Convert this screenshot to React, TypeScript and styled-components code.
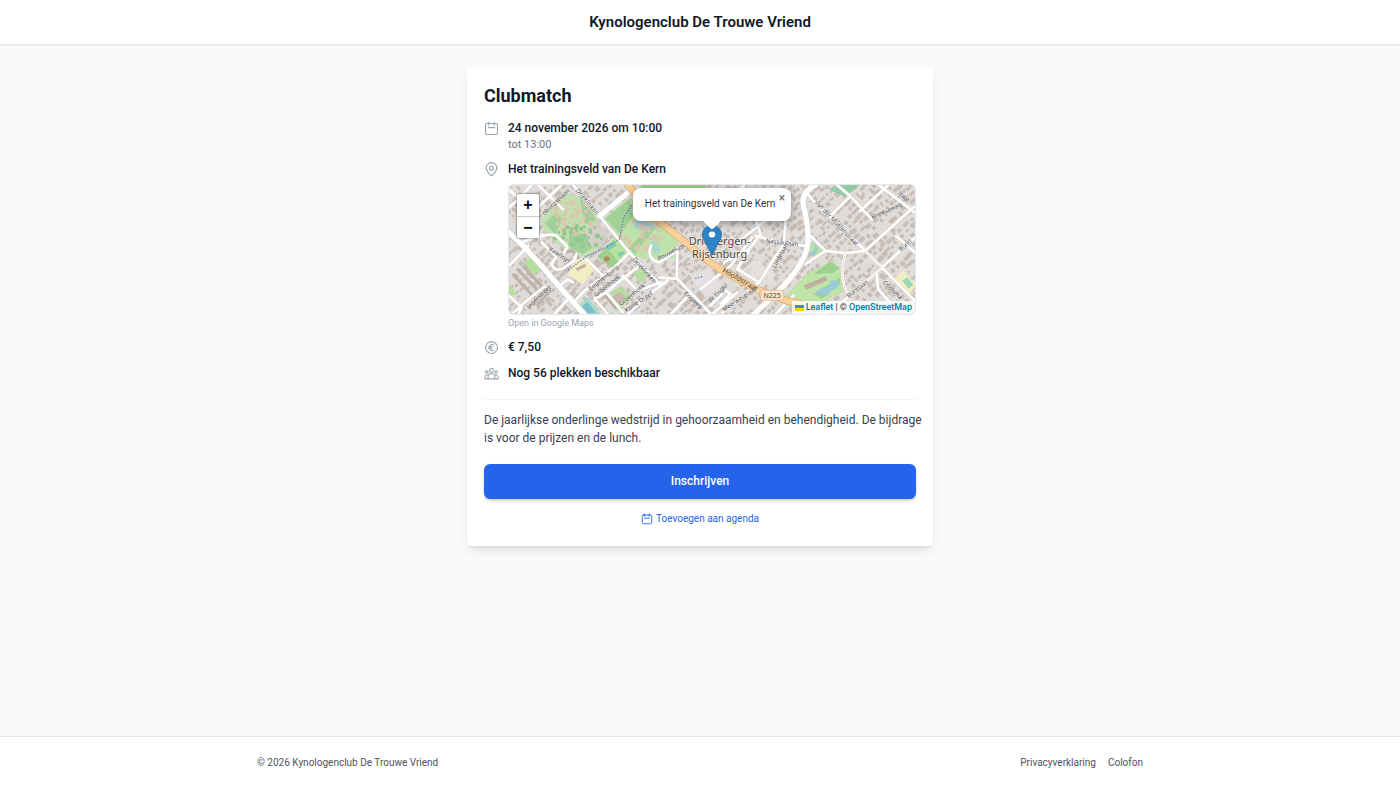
import React from "react";
import styled, { createGlobalStyle } from "styled-components";

const GlobalStyle = createGlobalStyle`
  *, *::before, *::after { box-sizing: border-box; }
  body {
    margin: 0;
    background: #f9fafb;
    color: #111827;
    font-family: Roboto, "Liberation Sans", sans-serif;
    font-size: 12px;
    line-height: 17px;
  }
  h1, h2, p { margin: 0; }
  a { text-decoration: none; }
`;

const Page = styled.div`
  display: flex;
  flex-direction: column;
  min-height: 100vh;
`;

const Header = styled.header`
  background: #ffffff;
  padding: 11px 16px;
  text-align: center;
  box-shadow: 0 1px 2px rgba(0, 0, 0, 0.12);
`;

const ClubName = styled.p`
  font-size: 15px;
  line-height: 22px;
  font-weight: 600;
`;

const Main = styled.main`
  flex: 1;
  padding: 24px 12px;
`;

const Card = styled.article`
  max-width: 466px;
  margin: 0 auto;
  padding: 17px 17px 20px;
  background: #ffffff;
  border-radius: 6px;
  box-shadow: 0 7px 11px -2px rgba(0, 0, 0, 0.1), 0 3px 4px -3px rgba(0, 0, 0, 0.1);
`;

const Title = styled.h1`
  font-size: 18px;
  line-height: 22px;
  font-weight: 700;
`;

const Details = styled.div`
  display: flex;
  flex-direction: column;
  gap: 9px;
  margin-top: 13px;
`;

const DetailRow = styled.div`
  display: flex;
  gap: 9px;
`;

const DetailIcon = styled.svg`
  flex: none;
  width: 15px;
  height: 15px;
  margin-top: 1px;
  fill: none;
  stroke: #9ca3af;
  stroke-width: 1.8;
  stroke-linecap: round;
  stroke-linejoin: round;
`;

const DetailBody = styled.div`
  flex: 1;
  min-width: 0;
`;

const DetailTitle = styled.p`
  font-weight: 500;
`;

const DetailNote = styled.p`
  font-size: 11px;
  line-height: 15px;
  color: #6b7280;
`;

const MapFrame = styled.div`
  position: relative;
  height: 131px;
  margin-top: 6px;
  overflow: hidden;
  border: 1px solid #e5e7eb;
  border-radius: 6px;
  background: #dfdcda;
`;

const MapDrawing = styled.svg`
  display: block;
  width: 100%;
  height: 100%;
`;

const ZoomControl = styled.div`
  position: absolute;
  top: 8px;
  left: 7px;
  display: flex;
  flex-direction: column;
  border: 1px solid rgba(0, 0, 0, 0.25);
  border-radius: 3px;
  box-shadow: 0 0 2px rgba(0, 0, 0, 0.25);
  overflow: hidden;
`;

const ZoomButton = styled.button`
  width: 22px;
  height: 22px;
  padding: 0;
  border: 0;
  background: #ffffff;
  color: #000000;
  font: bold 16px/22px "Liberation Sans", sans-serif;
  & + & { border-top: 1px solid #cccccc; }
`;

const Popup = styled.div`
  position: absolute;
  top: 3px;
  left: 50%;
  width: 158px;
  height: 33px;
  padding-right: 4px;
  transform: translateX(-50%);
  border-radius: 8px;
  background: #ffffff;
  color: #333333;
  font-size: 10px;
  line-height: 32px;
  text-align: center;
  box-shadow: 0 2px 9px rgba(0, 0, 0, 0.4);
`;

const PopupTip = styled.svg`
  position: absolute;
  top: 32px;
  left: 50%;
  width: 20px;
  height: 9px;
  margin-left: -10px;
`;

const PopupClose = styled.button`
  position: absolute;
  top: 3px;
  right: 2px;
  width: 14px;
  height: 14px;
  padding: 0;
  border: 0;
  background: none;
  color: #666666;
  font: 12px/14px Roboto, sans-serif;
`;

const Marker = styled.svg`
  position: absolute;
  top: 40px;
  left: 50%;
  width: 20px;
  height: 31px;
  margin-left: -10px;
`;

const Attribution = styled.div`
  position: absolute;
  right: 0;
  bottom: 0;
  display: flex;
  align-items: center;
  gap: 2px;
  padding: 0 3px;
  background: rgba(255, 255, 255, 0.8);
  color: #333333;
  font-size: 9px;
  line-height: 13px;
  font-weight: 500;
  a { color: #0078a8; }
`;

const MapsLink = styled.a`
  display: block;
  margin-top: 2px;
  font-size: 9px;
  line-height: 13px;
  color: #9ca3af;
`;

const DescriptionBlock = styled.section`
  margin-top: 17px;
  padding-top: 11px;
  border-top: 1px solid #f3f4f6;
`;

const Description = styled.p`
  margin-right: -12px;
  line-height: 18px;
  color: #374151;
`;

const SignUpButton = styled.button`
  display: block;
  width: 100%;
  height: 35px;
  margin-top: 17px;
  border: 0;
  border-radius: 6px;
  background: #2563eb;
  color: #ffffff;
  font: 500 12px/17px Roboto, sans-serif;
  box-shadow: 0 3px 4px -1px rgba(0, 0, 0, 0.12), 0 1px 3px rgba(0, 0, 0, 0.12);
`;

const AgendaLink = styled.a`
  display: flex;
  justify-content: center;
  align-items: center;
  gap: 3px;
  margin-top: 12px;
  font-size: 10px;
  line-height: 15px;
  color: #2563eb;
  svg {
    width: 12px;
    height: 12px;
    margin-top: 0;
    stroke: currentColor;
  }
`;

const Footer = styled.footer`
  background: #ffffff;
  border-top: 1px solid #e5e7eb;
  padding: 18px 12px 17px;
  font-size: 10px;
  line-height: 15px;
  color: #4b5563;
`;

const FooterInner = styled.div`
  display: flex;
  justify-content: space-between;
  max-width: 886px;
  margin: 0 auto;
`;

const FooterNav = styled.nav`
  display: flex;
  gap: 12px;
  a { color: inherit; }
`;

const CalendarGlyph = () => (
  <DetailIcon viewBox="0 0 24 24" aria-hidden="true">
    <rect x="2.5" y="4" width="19" height="17.5" rx="2.5" />
    <path d="M7.500 2v4.500M16.500 2v4.500M7 10.500h10" />
  </DetailIcon>
);

const PinGlyph = () => (
  <DetailIcon viewBox="0 0 24 24" aria-hidden="true">
    <path d="M12 22c-4-3.500-8.500-7.500-8.500-12.500a8.500 8.500 0 0 1 17 0c0 5-4.500 9-8.500 12.500z" />
    <circle cx="12" cy="10" r="3.200" />
  </DetailIcon>
);

const EuroGlyph = () => (
  <DetailIcon viewBox="0 0 24 24" aria-hidden="true">
    <circle cx="12" cy="12" r="9.5" />
    <path d="M15.5 7.8c-3.3-2.4-6.5.1-6.5 4.2s3.200 6.600 6.500 4.200M7.200 10.800h6M7.200 13.200h6" />
  </DetailIcon>
);

const PeopleGlyph = () => (
  <DetailIcon viewBox="0 0 24 24" aria-hidden="true">
    <circle cx="12" cy="7" r="3" />
    <circle cx="4.500" cy="9.500" r="2" />
    <circle cx="19.500" cy="9.500" r="2" />
    <path d="M6.500 20.500v-3a5.500 5.500 0 0 1 11 0v3zM6.500 20.500H1.500v-2.500a3.500 3.500 0 0 1 5-3.200M17.500 20.500h5v-2.500a3.500 3.500 0 0 0-5-3.200" />
  </DetailIcon>
);

/* Repeatable pseudo-random numbers, so houses and trees stay in place between renders. */
const sequence = (seed: number) => () => {
  seed = (seed * 16807) % 2147483647;
  return seed / 2147483647;
};

const housePath = (() => {
  const next = sequence(41);
  let d = "";
  for (let row = -58; row < 62; row++) {
    for (let col = -60; col < 62; col++) {
      const along = col * 17 + next() * 8;
      const across = row * 19 + next() * 8;
      const w = 7 + next() * 11;
      const h = 6 + next() * 9;
      const keep = next() < 0.78;
      const x = 624 + along * 0.72 + across * 0.69;
      const y = 200 + along * -0.69 + across * 0.72;
      if (!keep || x < -10 || x > 1250 || y < -10 || y > 410) continue;
      d += `M${x.toFixed(1)} ${y.toFixed(1)}l${(w * 0.72).toFixed(1)} ${(-w * 0.69).toFixed(1)}l${(h * 0.69).toFixed(1)} ${(h * 0.72).toFixed(1)}l${(-w * 0.72).toFixed(1)} ${(w * 0.69).toFixed(1)}z`;
    }
  }
  return d;
})();

const scatter = (seed: number, count: number, x: number, y: number, w: number, h: number) => {
  const next = sequence(seed);
  return Array.from({ length: count }, () => {
    const a = next() * Math.PI * 2;
    const r = Math.sqrt(next());
    return { x: x + (Math.cos(a) * r * w) / 2, y: y + (Math.sin(a) * r * h) / 2, r: 2 + next() * 5 };
  });
};

const parkDots = [...scatter(7, 80, 205, 100, 130, 120), ...scatter(19, 60, 410, 160, 130, 110)];
const gardenDots = scatter(77, 50, 225, 165, 150, 80);

const minorRoads = [
  "M205 6L285 100L375 210L468 308",
  "M70 100L130 45L170 6", "M12 75L45 45L80 6", "M100 6L175 80", "M12 22L60 60",
  "M100 165Q150 145 165 170L188 192L178 212", "M50 180L110 155",
  "M110 180L155 222L140 245Q150 270 175 258L208 235L215 215",
  "M165 310L190 290L205 300", "M245 230L300 285",
  "M375 210L330 255L240 325L205 362", "M405 250L360 285L305 330L270 350L310 396",
  "M355 280L400 325L470 300", "M305 330L355 390", "M465 285L520 290L560 332L625 400",
  "M520 195L518 290", "M490 295L430 340L370 396", "M440 190Q425 230 465 240L520 205",
  "M120 312L60 360L20 396", "M12 250L70 190", "M12 340L50 375L40 396", "M150 396L190 350",
  "M560 332L500 396", "M590 320L680 250L745 165", "M625 396L700 330",
  "M756 160L836 182L906 190", "M846 110L841 182L766 300L656 392", "M756 110L770 155L736 200L660 240",
  "M700 180L790 110", "M620 370L665 325L680 335L650 365", "M766 300L700 260L735 205",
  "M916 155L966 205L1026 212L1086 205L1236 70", "M966 205L906 245", "M1086 205L1136 255L1240 360",
  "M1086 205L930 55L910 30", "M1236 165L1136 255L1006 370L960 396",
  "M1026 212C1012 260 1015 310 1041 350", "M986 95L1041 40L1106 110", "M1071 85L1156 6",
  "M1126 6L1236 90", "M1041 40L1000 6", "M1120 270L1125 320L1180 385", "M1180 160L1236 210",
  "M816 396L870 340", "M650 60L720 10",
].join("");

const majorRoads = [
  "M12 150L55 190L110 250L170 320L240 398", "M285 100L378 24",
  "M936 6Q890 30 900 70C915 130 920 190 900 225C870 290 820 330 748 398",
].join("");

type StreetName = [text: string, x: number, y: number, angle: number];
const streetNames: StreetName[] = [
  ["nburgselaan", 118, 98, -43], ["Drieklinken", 213, 24, 50], ["Valentijn", 130, 202, 34],
  ["Jagerstreet", 72, 380, -43], ["Engelenburg", 258, 325, -39], ["Groenhoek", 275, 345, -39],
  ["Groenhoek", 350, 371, -39], ["Korte Dreef", 366, 391, -34], ["Drieklinken", 384, 232, 48],
  ["Rouwelust", 464, 234, -28], ["Engweg", 538, 335, 42], ["de Engh", 618, 362, -42],
  ["Meerweselaan", 660, 389, -34], ["Nassaulaan", 786, 180, 7], ["Lindelaan", 816, 258, -62],
  ["van der Muelenstraat", 932, 60, 46], ["Brinkseweg", 1108, 110, -24], ["Buntlaan", 1036, 348, -38],
  ["Buntl", 1194, 208, -43], ["Coolsma", 1138, 302, 44], ["traat", 1184, 32, 45],
];

const StreetMap = () => (
  <MapDrawing viewBox="12 6 1224 390" preserveAspectRatio="xMidYMid slice" role="img" aria-label="Kaart van Driebergen-Rijsenburg">
    <rect x="0" y="0" width="1250" height="410" fill="#dfdcda" />
    <path d={housePath} fill="#c8bdb5" />
    <path d="M108 108L190 30L240 50L285 105L270 150L290 185L250 225L205 215L150 180L120 150z" fill="#c3dfb0" />
    <path d="M120 120l35-30 20 20-25 45zM195 150l50 5 20 40-30 20-45-25zM225 45l30 25 20 45-35 10z" fill="#9fcf9a" />
    <path d="M240 150l35-35 40 35-15 30-40 10z" fill="#d5cfc8" />
    <path d="M300 105L378 45L400 90L470 120L525 165L515 225L445 235L385 218L350 170z" fill="#bfe2ab" />
    <path d="M300 108L375 48L385 100L350 155zM375 195l65-70 15 10-65 80z" fill="#a0d295" />
    <path d="M410 6H606V20H410z" fill="#a4d29a" />
    <path d="M285 210L335 160L375 205L325 250z" fill="#b6e2a0" />
    <path d="M280 225l25-30 40 45-20 18z" fill="#9fcf8e" />
    <path d="M303 190l25-14 9 12-25 17zM338 214l16-9 7 9-15 10z" fill="#82cdb0" />
    <circle cx="307" cy="229" r="8" fill="#b78752" />
    <path d="M385 120Q400 100 430 118T470 128L440 140Q400 155 385 120z" fill="#a8cfd8" />
    <path d="M440 178q18-8 26 12t-12 24q-18-10-14-36z" fill="#a8d9c6" />
    <g fill="#dcc5ac">{parkDots.map((dot, i) => <circle key={i} cx={dot.x} cy={dot.y} r={dot.r} />)}</g>
    <g fill="#8cc78e">{gardenDots.map((dot, i) => <circle key={i} cx={dot.x} cy={dot.y} r={dot.r} />)}</g>
    <path d="M58 238l28-20 28 38-30 24zM12 305l25 28-25 12z" fill="#b5df9c" />
    <path d="M205 235L235 225L270 260L235 305L190 280z" fill="#f3edc2" />
    <path d="M220 370L250 345L290 396H235z" fill="#a5dcc9" />
    <path d="M232 372l17-13 26 34h-25z" fill="#78bfd0" />
    <path d="M305 340l45-30 35 35-50 45zM385 270l30-12 20 25-30 20z" fill="#b7dda0" />
    <path d="M322 345l25-18 18 20-28 24z" fill="#c9b8ab" />
    <g fill="none" stroke="#bfb1a8" strokeWidth="9">
      <path d="M22 275l75 80M36 258l78 82M54 250l72 80M285 318l50 62M170 215l32-12 22 25M215 262l28-14M95 370l45-48" />
    </g>
    <path d="M165 350l18-12 35 40-17 12z" fill="#dddde4" stroke="#aaa" strokeWidth="2" />
    <path d="M976 20L1000 6H1070L1026 42z" fill="#90cca6" />
    <path d="M846 340L916 270L986 235L1018 265L1022 330L980 345L950 385L850 372z" fill="#bfe4a8" />
    <path d="M930 275l50-38 30 20-20 15zM930 335l80-50v20l-55 45z" fill="#9ed08f" />
    <path d="M922 190l12-20 28 32-28 24-14-12z" fill="#b8e1a4" />
    <path d="M916 212Q945 205 926 175L942 195Q945 214 922 222zM930 340Q950 310 978 315Q975 285 1000 298Q1020 285 1000 318Q975 322 975 340Q950 330 930 340z" fill="#9ccbd8" />
    <path d="M900 310l65-28 8 12-65 28z" fill="#c0b09f" />
    <path d="M1170 290l30-25 40 42-22 32-20-12z" fill="#f1efc1" />
    <path d="M1198 295l15-10 18 22-15 12z" fill="#99d7b5" />
    <path d="M700 290l60-60 55 50-55 45z" fill="#e7e2e0" fillOpacity="0.7" />
    <path d="M560 290l55-40 40 60-50 35z" fill="#e4e0df" />
    <g fill="none" strokeLinejoin="round" strokeLinecap="round">
      <path d={minorRoads} stroke="#cfc8c5" strokeWidth="10" />
      <path d={majorRoads} stroke="#cbc5c2" strokeWidth="18" />
      <path d={minorRoads} stroke="#ffffff" strokeWidth="8" />
      <path d={majorRoads} stroke="#ffffff" strokeWidth="16" />
      <path d="M520 268L606 222M1026 212C1012 260 1015 310 1041 350M1086 205L1136 255L1050 330" stroke="#eec4c6" strokeWidth="3" strokeDasharray="5 5" />
      <path d="M364 -4L400 45L470 120L560 192L620 242L666 270L756 320L846 355L960 380" stroke="#dcaa70" strokeWidth="22" />
      <path d="M364 -4L400 45L470 120L560 192L620 242L666 270L756 320L846 355L960 380" stroke="#fbd09a" strokeWidth="18" />
      <path d="M192 262L245 222L310 192L345 170L358 105L384 65M575 288l18-5" stroke="#6972cf" strokeWidth="4" strokeDasharray="1 8" />
    </g>
    <g fontFamily='"Noto Sans", sans-serif' fontSize="18" fill="#444444" stroke="#ffffff" strokeOpacity="0.5" strokeWidth="3" paintOrder="stroke">
      {streetNames.map(([name, x, y, angle], i) => (
        <text key={i} transform={`translate(${x} ${y}) rotate(${angle})`}>{name}</text>
      ))}
      <text transform="translate(654 268) rotate(30)" fontSize="21" strokeOpacity="0">Hoofdstraat</text>
    </g>
    <rect x="770" y="324" width="70" height="30" rx="4" fill="#fbe3c6" stroke="#d8b28a" strokeWidth="2" />
    <g fontFamily='"Noto Sans", sans-serif' fill="#4a4545" textAnchor="middle">
      <text x="805" y="347" fontSize="21">N225</text>
      <g fontSize="33" stroke="#ffffff" strokeOpacity="0.6" strokeWidth="4" paintOrder="stroke">
        <text x="647" y="186">Driebergen-</text>
        <text x="647" y="228">Rijsenburg</text>
      </g>
    </g>
  </MapDrawing>
);

const LocationMap = () => (
  <MapFrame>
    <StreetMap />
    <Marker viewBox="0 0 25 41" aria-hidden="true" preserveAspectRatio="none">
      <path d="M12.500 .5C5.800.5.500 5.800.500 12.500c0 3 1.500 6 3 9L12.500 40l9-18.500c1.500-3 3-6 3-9C24.500 5.800 19.200.5 12.500.5z" fill="#2d83c7" stroke="#286da8" />
      <circle cx="12.500" cy="12.500" r="4" fill="#ffffff" />
    </Marker>
    <ZoomControl>
      <ZoomButton type="button" aria-label="Inzoomen">+</ZoomButton>
      <ZoomButton type="button" aria-label="Uitzoomen">−</ZoomButton>
    </ZoomControl>
    <Popup>
      Het trainingsveld van De Kern
      <PopupTip viewBox="0 0 20 9" aria-hidden="true"><path d="M0 0h20l-8 8q-2 2-4 0z" fill="#ffffff" /></PopupTip>
      <PopupClose type="button" aria-label="Sluiten">×</PopupClose>
    </Popup>
    <Attribution>
      <svg width="9" height="6" aria-hidden="true"><path fill="#4c7be1" d="M0 0h9v3H0z" /><path fill="#ffd500" d="M0 3h9v3H0z" /></svg>
      <a href="https://leafletjs.com">Leaflet</a>
      <span>|</span>
      <span>© <a href="https://www.openstreetmap.org/copyright">OpenStreetMap</a></span>
    </Attribution>
  </MapFrame>
);

export default function App() {
  return (
    <Page>
      <GlobalStyle />
      <Header><ClubName>Kynologenclub De Trouwe Vriend</ClubName></Header>
      <Main>
        <Card>
          <Title>Clubmatch</Title>
          <Details>
            <DetailRow>
              <CalendarGlyph />
              <DetailBody>
                <DetailTitle>24 november 2026 om 10:00</DetailTitle>
                <DetailNote>tot 13:00</DetailNote>
              </DetailBody>
            </DetailRow>
            <DetailRow>
              <PinGlyph />
              <DetailBody>
                <DetailTitle>Het trainingsveld van De Kern</DetailTitle>
                <LocationMap />
                <MapsLink href="#maps">Open in Google Maps</MapsLink>
              </DetailBody>
            </DetailRow>
            <DetailRow>
              <EuroGlyph />
              <DetailBody><DetailTitle>€ 7,50</DetailTitle></DetailBody>
            </DetailRow>
            <DetailRow>
              <PeopleGlyph />
              <DetailBody><DetailTitle>Nog 56 plekken beschikbaar</DetailTitle></DetailBody>
            </DetailRow>
          </Details>
          <DescriptionBlock>
            <Description>
              De jaarlijkse onderlinge wedstrijd in gehoorzaamheid en behendigheid. De bijdrage is voor de prijzen en de lunch.
            </Description>
          </DescriptionBlock>
          <SignUpButton type="button">Inschrijven</SignUpButton>
          <AgendaLink href="#agenda"><CalendarGlyph />Toevoegen aan agenda</AgendaLink>
        </Card>
      </Main>
      <Footer>
        <FooterInner>
          <span>© 2026 Kynologenclub De Trouwe Vriend</span>
          <FooterNav aria-label="Voettekst">
            <a href="#privacy">Privacyverklaring</a>
            <a href="#colofon">Colofon</a>
          </FooterNav>
        </FooterInner>
      </Footer>
    </Page>
  );
}
